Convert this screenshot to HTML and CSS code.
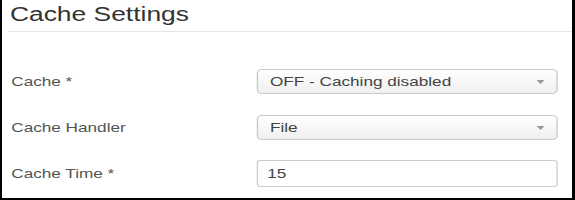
FILE: index.html
```html
<!DOCTYPE html>
<html lang="en">
<head>
    <meta charset="UTF-8">
    <title>Cache Settings</title>
    <link rel="stylesheet" href="styles.css">
</head>
<body>
    <!-- Screenshot frame -->
    <div class="frame">
        <div class="sheet">
            <h2 class="heading">Cache Settings</h2>

            <div class="fields">
                <div class="row">
                    <label for="cache">Cache *</label>
                    <div class="select">
                        <select id="cache">
                            <option>OFF - Caching disabled</option>
                            <option>ON - Conservative caching</option>
                            <option>ON - Progressive caching</option>
                        </select>
                    </div>
                </div>

                <div class="row">
                    <label for="handler">Cache Handler</label>
                    <div class="select">
                        <select id="handler">
                            <option>File</option>
                        </select>
                    </div>
                </div>

                <div class="row">
                    <label for="cachetime">Cache Time *</label>
                    <input type="text" id="cachetime" value="15">
                </div>
            </div>
        </div>
    </div>
</body>
</html>
```

FILE: styles.css
```css
html, body {
    margin: 0;
    padding: 0;
    background: #fff;
}
.frame {
    width: 575px;
    height: 200px;
    box-sizing: border-box;
    border-left: 2px solid #000;
    border-right: 3px solid #000;
    border-bottom: 2px solid #000;
    overflow: hidden;
}
/* the original capture is stretched sideways */
.sheet {
    width: 432px;
    transform: scaleX(1.32);
    transform-origin: 0 0;
    font-family: "Liberation Sans", Arial, sans-serif;
}
.heading {
    margin: 0 0 0 4.5px;
    padding: 1px 0 4px 1.5px;
    font-size: 20px;
    line-height: 26px;
    font-weight: normal;
    color: #333;
    border-bottom: 1px solid #e5e5e5;
}
.fields {
    margin-top: 26px;
    padding: 0 11px 0 7px;
}
.row {
    display: grid;
    grid-template-columns: 186px 1fr;
    align-items: center;
    height: 46px;
}
label {
    font-size: 13px;
    color: #555;
}
.select {
    position: relative;
}
.select select {
    display: block;
    width: 100%;
    height: 25px;
    box-sizing: border-box;
    margin: 0;
    padding: 0 20px 0 9px;
    border: 1px solid #c8c8c8;
    border-radius: 4px;
    background: linear-gradient(#fff, #efefef);
    font-family: inherit;
    font-size: 13px;
    color: #444;
    -webkit-appearance: none;
    appearance: none;
}
.select::after {
    content: "";
    position: absolute;
    right: 10px;
    top: 11px;
    border-left: 3px solid transparent;
    border-right: 3px solid transparent;
    border-top: 4px solid #999;
    pointer-events: none;
}
input[type="text"] {
    display: block;
    width: 100%;
    height: 27px;
    box-sizing: border-box;
    margin: 0;
    padding: 0 7px;
    border: 1px solid #ccc;
    border-radius: 3px;
    font-family: inherit;
    font-size: 13px;
    color: #444;
}
```
